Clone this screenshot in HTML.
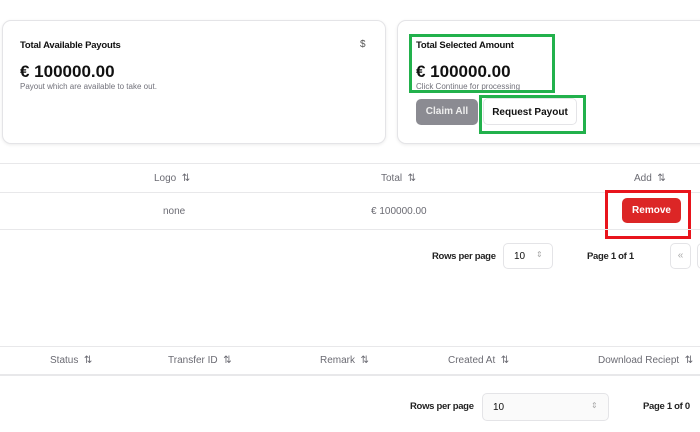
<!DOCTYPE html>
<html><head><meta charset="utf-8"><style>
*{box-sizing:border-box;margin:0;padding:0}
body{width:700px;height:432px;overflow:hidden;background:#fff;font-family:"Liberation Sans",sans-serif;color:#111;position:relative}
.a{position:absolute;white-space:nowrap}
.card{position:absolute;border:1px solid #e4e4e7;border-radius:9px;box-shadow:0 1px 3px rgba(0,0,0,.08);background:#fff}
.t{font-size:9.5px;font-weight:bold;letter-spacing:-0.2px}
.amt{font-size:17px;font-weight:bold}
.sub{font-size:8px;color:#71717a}
.h{font-size:10px;color:#6b6b73}
.line{position:absolute;left:0;width:700px;height:1px;background:#e8e8ea}
.sel{position:absolute;border:1px solid #e4e4e7;border-radius:5px;background:#fff;font-size:10px}
.b{font-size:9.5px;font-weight:bold;color:#222;letter-spacing:-0.3px}
</style></head><body>
<div class="card" style="left:2px;top:20px;width:384px;height:124px"></div>
<div class="card" style="left:397px;top:20px;width:320px;height:124px"></div>
<div class="a t" style="left:20px;top:40px">Total Available Payouts</div>
<div class="a" style="left:360px;top:39px;font-size:10px;color:#555">$</div>
<div class="a amt" style="left:20px;top:62px">€ 100000.00</div>
<div class="a sub" style="left:20px;top:82px">Payout which are available to take out.</div>
<div class="a" style="left:409px;top:34px;width:146px;height:59px;border:3px solid #22b14c"></div>
<div class="a t" style="left:416px;top:40px">Total Selected Amount</div>
<div class="a amt" style="left:416px;top:62px">€ 100000.00</div>
<div class="a sub" style="left:416px;top:82px">Click Continue for processing</div>
<div class="a" style="left:416px;top:99px;width:62px;height:26px;background:#8b8b92;border-radius:5px;color:#eee;font-size:10px;font-weight:bold;text-align:center;line-height:26px">Claim All</div>
<div class="a" style="left:479px;top:95px;width:107px;height:39px;border:3px solid #22b14c"></div>
<div class="a" style="left:483px;top:98px;width:94px;height:27px;border:1px solid #e4e4e7;border-radius:5px;background:#fff;font-size:10px;font-weight:bold;text-align:center;line-height:27px">Request Payout</div>

<div class="line" style="top:163px"></div>
<div class="a h" style="left:154px;top:173px">Logo&nbsp; ⇅</div>
<div class="a h" style="left:381px;top:173px">Total&nbsp; ⇅</div>
<div class="a h" style="left:634px;top:173px">Add&nbsp; ⇅</div>
<div class="line" style="top:192px"></div>
<div class="a h" style="left:163px;top:206px">none</div>
<div class="a h" style="left:371px;top:206px">€ 100000.00</div>
<div class="a" style="left:605px;top:190px;width:86px;height:49px;border:3px solid #e8141c"></div>
<div class="a" style="left:622px;top:198px;width:59px;height:25px;background:#dc2626;border-radius:5px;color:#fff;font-size:10px;font-weight:bold;text-align:center;line-height:25px">Remove</div>
<div class="line" style="top:229px"></div>
<div class="a b" style="left:432px;top:251px">Rows per page</div>
<div class="sel" style="left:503px;top:243px;width:50px;height:26px;padding:7px 0 0 10px">10<span style="position:absolute;left:32px;top:6px;font-size:8px;color:#aaa">⇕</span></div>
<div class="a b" style="left:587px;top:251px">Page 1 of 1</div>
<div class="sel" style="left:670px;top:243px;width:21px;height:26px;text-align:center;line-height:24px;color:#aaa">«</div>
<div class="sel" style="left:697px;top:243px;width:21px;height:26px"></div>

<div class="line" style="top:346px"></div>
<div class="a h" style="left:50px;top:355px">Status&nbsp; ⇅</div>
<div class="a h" style="left:168px;top:355px">Transfer ID&nbsp; ⇅</div>
<div class="a h" style="left:320px;top:355px">Remark&nbsp; ⇅</div>
<div class="a h" style="left:448px;top:355px">Created At&nbsp; ⇅</div>
<div class="a h" style="left:598px;top:355px">Download Reciept&nbsp; ⇅</div>
<div class="line" style="top:374px;height:2px"></div>
<div class="a b" style="left:410px;top:401px">Rows per page</div>
<div class="sel" style="left:482px;top:393px;width:127px;height:28px;padding:8px 0 0 10px;background:#fafafa">10<span style="position:absolute;left:108px;top:7px;font-size:8px;color:#aaa">⇕</span></div>
<div class="a b" style="left:643px;top:401px">Page 1 of 0</div>
</body></html>
